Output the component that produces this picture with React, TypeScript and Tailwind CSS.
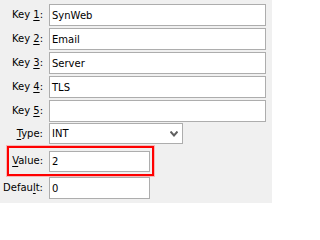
import React from "react";

const font = { fontFamily: '"DejaVu Sans", Tahoma, sans-serif' };

function Label({ pre, key1, post, w = "w-[45px]" }: { pre: string; key1: string; post: string; w?: string }) {
  return (
    <label className={`${w} shrink-0 pr-[2px] text-right text-[10px] text-black leading-none`}>
      {pre}
      <u className="underline underline-offset-2">{key1}</u>
      {post}
    </label>
  );
}

function Field({ value, w = "w-[217px]", h = "h-[22px]" }: { value: string; w?: string; h?: string }) {
  return (
    <div className={`${w} ${h} ml-[4px] flex items-center border border-[#adadad] bg-white pl-[2px] text-[10px] text-black`}>
      {value}
    </div>
  );
}

export default function App() {
  return (
    <div className="h-[203px] w-[272px] overflow-hidden bg-[#f0f0f0] pt-[4px]" style={font}>
      <div className="flex flex-col">
        {/* key rows */}
        {[
          ["SynWeb", "1"],
          ["Email", "2"],
          ["Server", "3"],
          ["TLS", "4"],
          ["", "5"],
        ].map(([v, n], i) => (
          <div key={n} className={`flex items-center ${i > 0 ? "mt-[2px]" : ""}`}>
            <Label pre="Key " key1={n} post=":" />
            <Field value={v} />
          </div>
        ))}

        {/* type */}
        <div className="mt-[1px] flex items-center">
          <Label pre="" key1="T" post="ype:" />
          <div className="ml-[4px] flex h-[21px] w-[134px] items-center justify-between border border-[#adadad] bg-white pl-[2px] pr-[4px] text-[10px] text-black">
            <span>INT</span>
            <svg width="8" height="6" viewBox="0 0 8 6">
              <path d="M0.5 0.5 L4 4.5 L7.5 0.5" fill="none" stroke="#606060" strokeWidth="2" />
            </svg>
          </div>
        </div>

        {/* value, highlighted */}
        <div className="ml-[7px] mt-[2px] flex h-[30px] w-[147px] items-center border-2 border-[#ff0000] shadow-[0_0_0_1px_rgba(255,80,80,0.35)]">
          <Label pre="" key1="V" post="alue:" w="w-[36px]" />
          <Field value="2" w="w-[101px]" h="h-[21px]" />
        </div>

        {/* default */}
        <div className="mt-[1px] flex items-center">
          <Label pre="Defau" key1="l" post="t:" />
          <Field value="0" w="w-[101px]" />
        </div>
      </div>
    </div>
  );
}
